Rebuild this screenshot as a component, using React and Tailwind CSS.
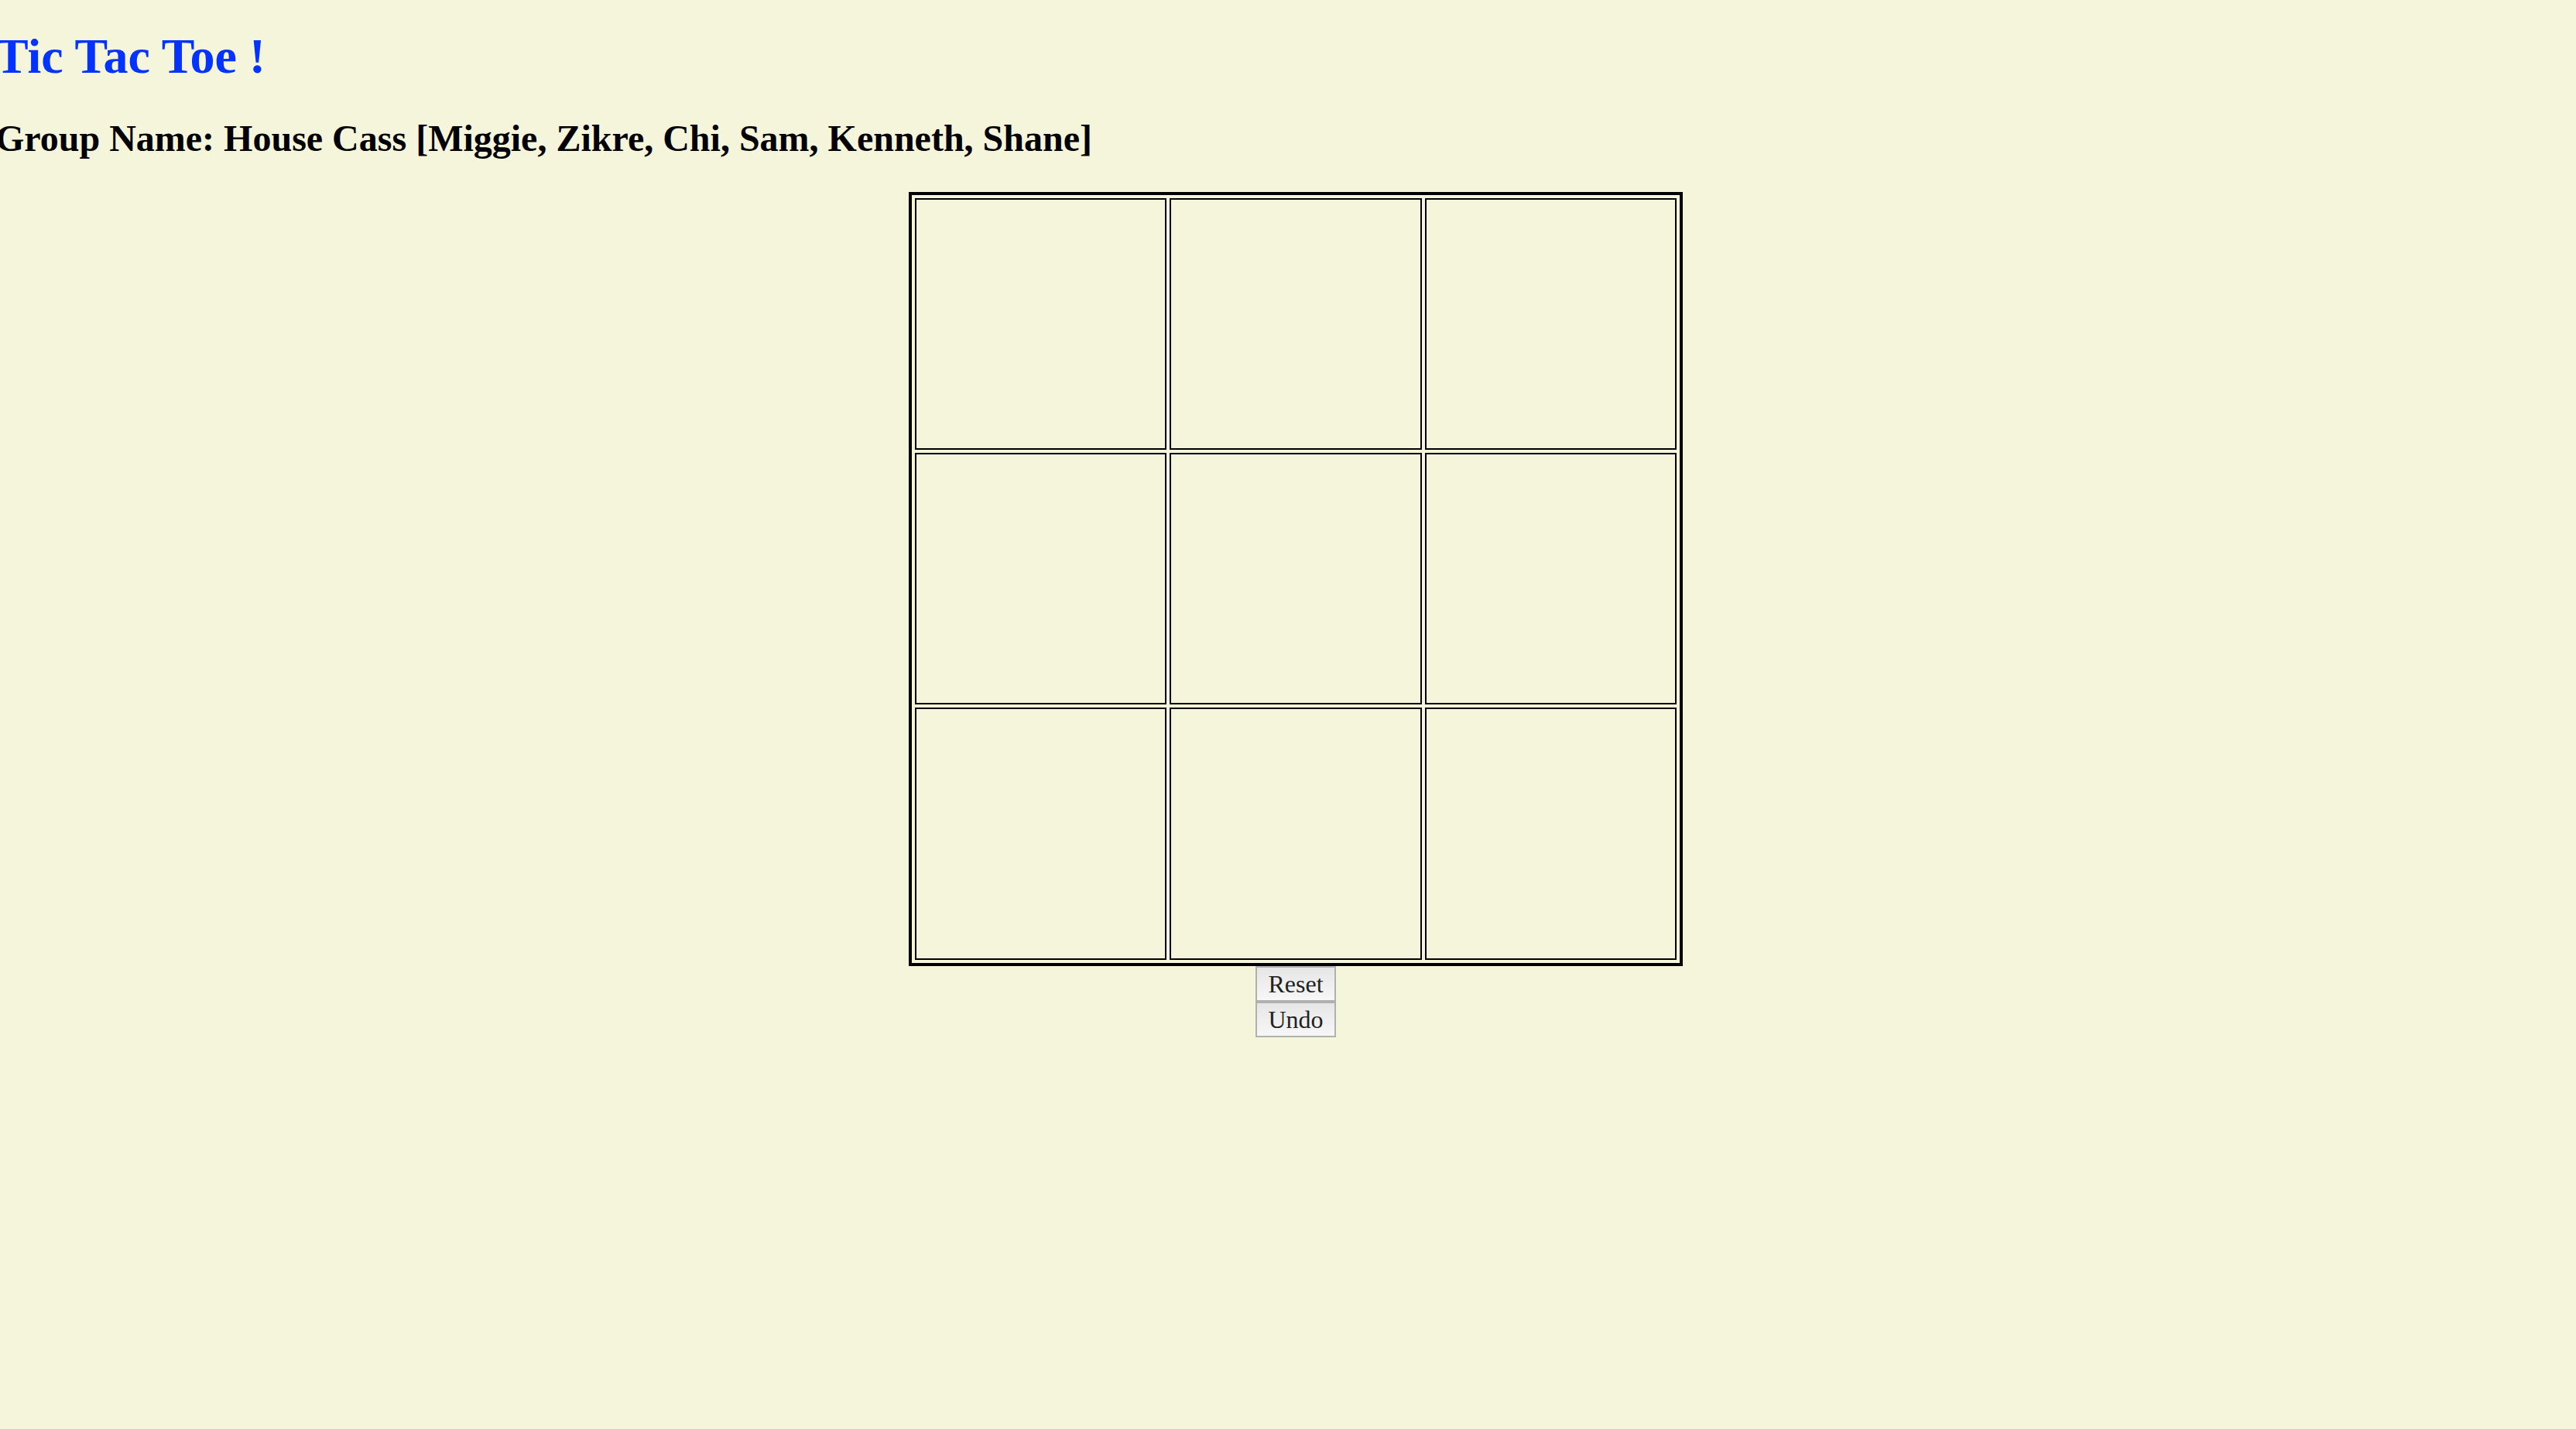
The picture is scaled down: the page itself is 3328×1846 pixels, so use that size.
import { useState } from 'react';

const serif = { fontFamily: '"Liberation Serif", "Times New Roman", serif' };

function Square({ value, onClick }) {
    return (
        <button
            onClick={onClick}
            className="border-2 border-black bg-transparent text-[160px] leading-none font-bold text-black"
            style={serif}
        >
            {value}
        </button>
    );
}

export default function App() {
    const [history, setHistory] = useState([Array(9).fill(null)]);
    const squares = history[history.length - 1];
    const xNext = history.length % 2 === 1;

    const play = (i) => {
        if (squares[i]) return;
        const next = squares.slice();
        next[i] = xNext ? 'X' : 'O';
        setHistory([...history, next]);
    };

    const reset = () => setHistory([Array(9).fill(null)]);
    const undo = () => {
        if (history.length > 1) setHistory(history.slice(0, -1));
    };

    return (
        <div className="min-h-screen bg-[#f5f5dc] pt-[36px] text-black" style={serif}>
            <h1 className="-ml-[6px] mb-[41px] text-[64px] font-bold leading-[1.15] text-[#0433ff]">Tic Tac Toe !</h1>
            <h2 className="-ml-[6px] mb-[42px] text-[48px] font-bold leading-[1.15]">
                Group Name: House Cass [Miggie, Zikre, Chi, Sam, Kenneth, Shane]
            </h2>

            {/* board + controls, nudged a little right like the original */}
            <div className="flex flex-col items-center pl-[20px]">
                <div className="grid h-[1000px] w-[1000px] grid-cols-3 grid-rows-3 gap-[4px] border-[4px] border-black p-[4px]">
                    {squares.map((v, i) => (
                        <Square key={i} value={v} onClick={() => play(i)} />
                    ))}
                </div>
                <div className="flex flex-col">
                    <button
                        onClick={reset}
                        className="w-[104px] border-2 border-[#b0b0b0] bg-gradient-to-b from-[#e6e6e6] to-[#f7f7f7] py-[3px] text-[32px] leading-[36px] text-[#222]"
                        style={serif}
                    >
                        Reset
                    </button>
                    <button
                        onClick={undo}
                        className="w-[104px] border-2 border-[#b0b0b0] bg-gradient-to-b from-[#e6e6e6] to-[#f7f7f7] py-[3px] text-[32px] leading-[36px] text-[#222]"
                        style={serif}
                    >
                        Undo
                    </button>
                </div>
            </div>
        </div>
    );
}
